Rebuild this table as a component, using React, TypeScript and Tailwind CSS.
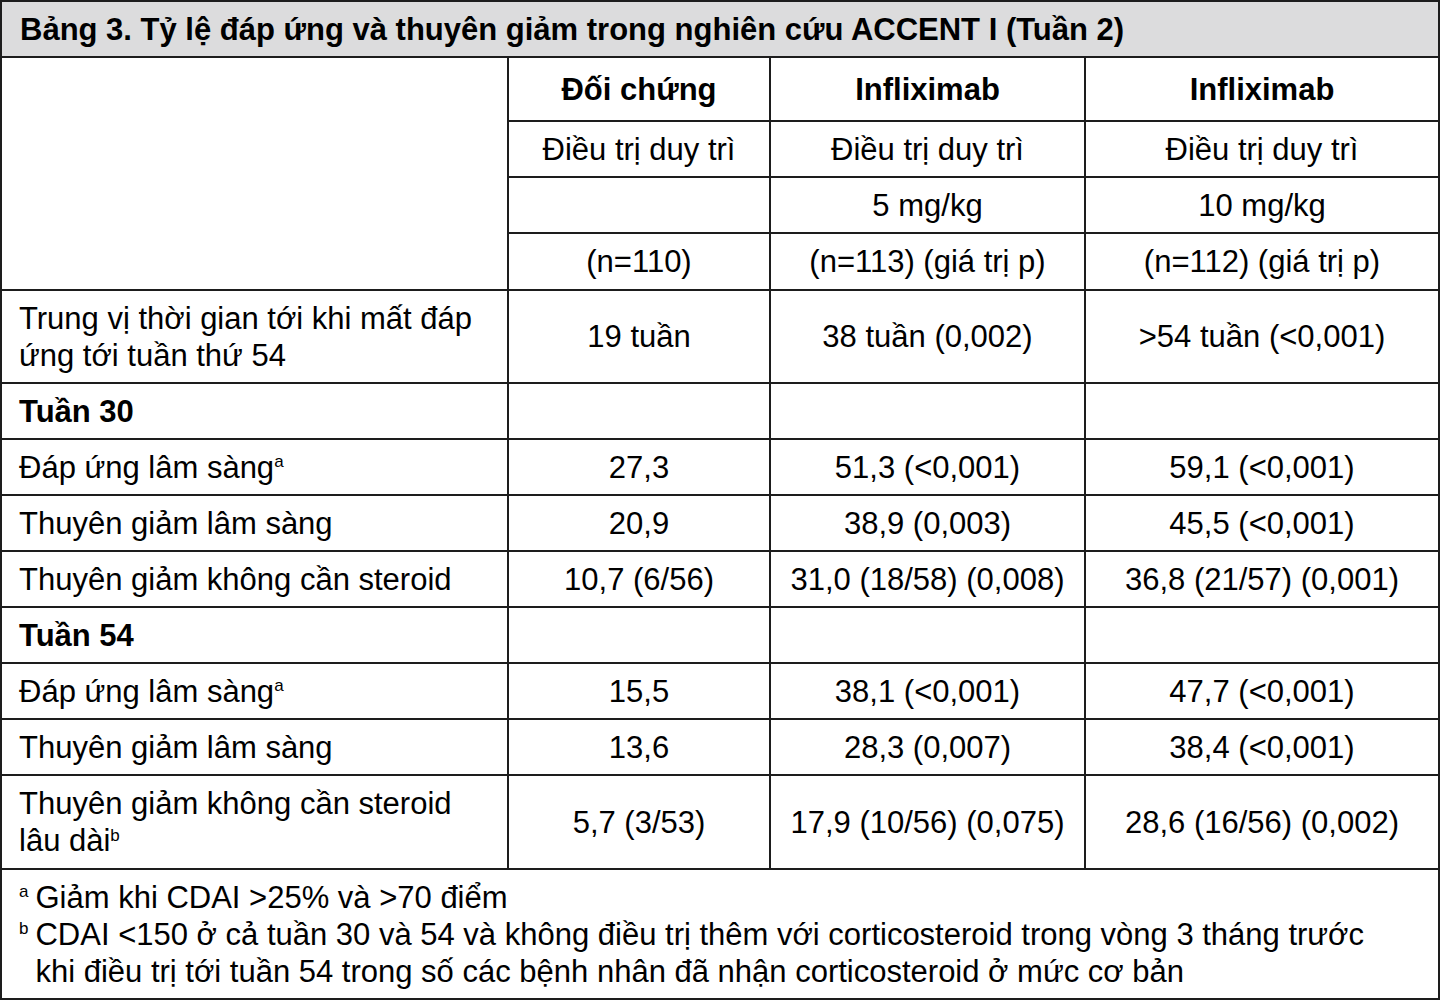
import React from "react";

const line = "border-2 border-[#1d1d1d]";

type Row = {
  label: React.ReactNode;
  values: string[];
  bold?: boolean;
  h: string;
};

const rows: Row[] = [
  {
    label: (
      <>
        Trung vị thời gian tới khi mất đáp
        <br />
        ứng tới tuần thứ 54
      </>
    ),
    values: ["19 tuần", "38 tuần (0,002)", ">54 tuần (<0,001)"],
    h: "h-[93px]",
  },
  { label: "Tuần 30", values: ["", "", ""], bold: true, h: "h-[56px]" },
  {
    label: (
      <>
        Đáp ứng lâm sàng<sup className="text-[17px] -top-[0.6em]">a</sup>
      </>
    ),
    values: ["27,3", "51,3 (<0,001)", "59,1 (<0,001)"],
    h: "h-[56px]",
  },
  { label: "Thuyên giảm lâm sàng", values: ["20,9", "38,9 (0,003)", "45,5 (<0,001)"], h: "h-[56px]" },
  {
    label: "Thuyên giảm không cần steroid",
    values: ["10,7 (6/56)", "31,0 (18/58) (0,008)", "36,8 (21/57) (0,001)"],
    h: "h-[56px]",
  },
  { label: "Tuần 54", values: ["", "", ""], bold: true, h: "h-[56px]" },
  {
    label: (
      <>
        Đáp ứng lâm sàng<sup className="text-[17px] -top-[0.6em]">a</sup>
      </>
    ),
    values: ["15,5", "38,1 (<0,001)", "47,7 (<0,001)"],
    h: "h-[56px]",
  },
  { label: "Thuyên giảm lâm sàng", values: ["13,6", "28,3 (0,007)", "38,4 (<0,001)"], h: "h-[56px]" },
  {
    label: (
      <>
        Thuyên giảm không cần steroid
        <br />
        lâu dài<sup className="text-[17px] -top-[0.6em]">b</sup>
      </>
    ),
    values: ["5,7 (3/53)", "17,9 (10/56) (0,075)", "28,6 (16/56) (0,002)"],
    h: "h-[94px]",
  },
];

export default function App() {
  return (
    <div className="bg-white min-h-[1001px] font-['Liberation_Sans',Arial,sans-serif] text-black">
      <div className={`w-[1440px] ${line}`}>
        <div className="h-[56px] bg-[#dcdcdd] border-b-2 border-[#1d1d1d] flex items-center pl-[18px] text-[31px] font-bold leading-none">
          Bảng 3. Tỷ lệ đáp ứng và thuyên giảm trong nghiên cứu ACCENT I (Tuần 2)
        </div>
        <table className="w-full border-collapse table-fixed text-[31px] leading-[37px]">
          <colgroup>
            <col className="w-[506px]" />
            <col className="w-[262px]" />
            <col className="w-[315px]" />
            <col />
          </colgroup>
          <tbody>
            <tr className="h-[63px]">
              <td rowSpan={4} className={`${line} border-l-0 border-t-0`} />
              <td className={`${line} border-t-0 text-center font-bold`}>Đối chứng</td>
              <td className={`${line} border-t-0 text-center font-bold`}>Infliximab</td>
              <td className={`${line} border-t-0 border-r-0 text-center font-bold`}>Infliximab</td>
            </tr>
            <tr className="h-[56px]">
              <td className={`${line} text-center`}>Điều trị duy trì</td>
              <td className={`${line} text-center`}>Điều trị duy trì</td>
              <td className={`${line} border-r-0 text-center`}>Điều trị duy trì</td>
            </tr>
            <tr className="h-[56px]">
              <td className={`${line} text-center`}></td>
              <td className={`${line} text-center`}>5 mg/kg</td>
              <td className={`${line} border-r-0 text-center`}>10 mg/kg</td>
            </tr>
            <tr className="h-[57px]">
              <td className={`${line} text-center`}>(n=110)</td>
              <td className={`${line} text-center`}>(n=113) (giá trị p)</td>
              <td className={`${line} border-r-0 text-center`}>(n=112) (giá trị p)</td>
            </tr>
            {rows.map((r, i) => (
              <tr key={i} className={r.h}>
                <td className={`${line} border-l-0 pl-[17px] ${r.bold ? "font-bold" : ""}`}>{r.label}</td>
                {r.values.map((v, j) => (
                  <td key={j} className={`${line} text-center ${j === 2 ? "border-r-0" : ""}`}>
                    {v}
                  </td>
                ))}
              </tr>
            ))}
          </tbody>
        </table>
        <div className="h-[128px] pt-[9px] pl-[17px] text-[31px] leading-[37px]">
          <div className="flex">
            <span className="text-[17px] leading-[26px] pr-[7px]">a</span>
            <span>Giảm khi CDAI &gt;25% và &gt;70 điểm</span>
          </div>
          <div className="flex">
            <span className="text-[17px] leading-[26px] pr-[7px]">b</span>
            <span>
              CDAI &lt;150 ở cả tuần 30 và 54 và không điều trị thêm với corticosteroid trong vòng 3 tháng trước
              <br />
              khi điều trị tới tuần 54 trong số các bệnh nhân đã nhận corticosteroid ở mức cơ bản
            </span>
          </div>
        </div>
      </div>
    </div>
  );
}
